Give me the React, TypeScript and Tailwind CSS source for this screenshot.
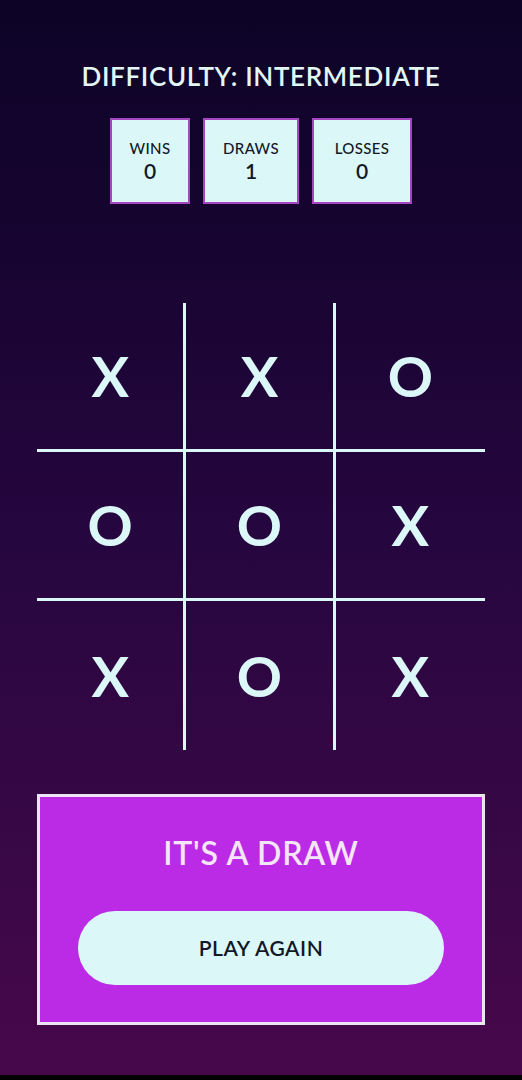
import React from 'react';

const board = ['X', 'X', 'O', 'O', 'O', 'X', 'X', 'O', 'X'];

const stats = [
  { label: 'Wins', value: 0, w: 'w-[80px]' },
  { label: 'Draws', value: 1, w: 'w-[96px]' },
  { label: 'Losses', value: 0, w: 'w-[100px]' },
];

export default function App() {
  return (
    <div className="h-[1080px] w-full bg-black" style={{ fontFamily: 'Lato, "Open Sans", sans-serif' }}>
      <div className="h-[1075px] w-full bg-linear-to-b from-[#0c0326] via-[#26063f] to-[#47074a] flex flex-col items-center pt-[60px]">
        {/* Difficulty */}
        <h1 className="text-[26px] leading-[32px] tracking-wide uppercase text-[#e2f6f6] font-semibold">
          Difficulty: Intermediate
        </h1>

        {/* Score boxes */}
        <div className="flex gap-[13px] mt-[26px]">
          {stats.map((s) => (
            <div
              key={s.label}
              className={`${s.w} h-[86px] bg-[#dcf7f7] border-2 border-[#a545c2] flex flex-col items-center justify-center text-[#111827]`}
            >
              <span className="text-[15px] leading-[20px] uppercase tracking-wide font-medium">{s.label}</span>
              <span className="text-[21px] leading-[26px] font-semibold">{s.value}</span>
            </div>
          ))}
        </div>

        {/* Board */}
        <div className="grid grid-cols-3 w-[448px] mt-[99px]">
          {board.map((v, i) => {
            const col = i % 3;
            const row = Math.floor(i / 3);
            return (
              <div
                key={i}
                className={`h-[149px] flex items-center justify-center border-[#dcf7f7] text-[#dcf7f7] text-[56px] font-bold ${
                  col < 2 ? 'border-r-[3px]' : ''
                } ${row < 2 ? 'border-b-[3px]' : ''}`}
              >
                {v}
              </div>
            );
          })}
        </div>

        {/* Result */}
        <div className="w-[448px] mt-[44px] bg-[#bb2ae5] border-[3px] border-[#ece3f3] flex flex-col items-center pt-[36px] pb-[37px]">
          <h2 className="text-[32px] leading-[40px] uppercase text-[#f4e6f8] font-semibold tracking-wide">
            It's a Draw
          </h2>
          <button className="mt-[38px] w-[366px] h-[74px] rounded-full bg-[#dcf7f7] text-[#111827] text-[21px] uppercase tracking-wide font-semibold">
            Play Again
          </button>
        </div>
      </div>
    </div>
  );
}
